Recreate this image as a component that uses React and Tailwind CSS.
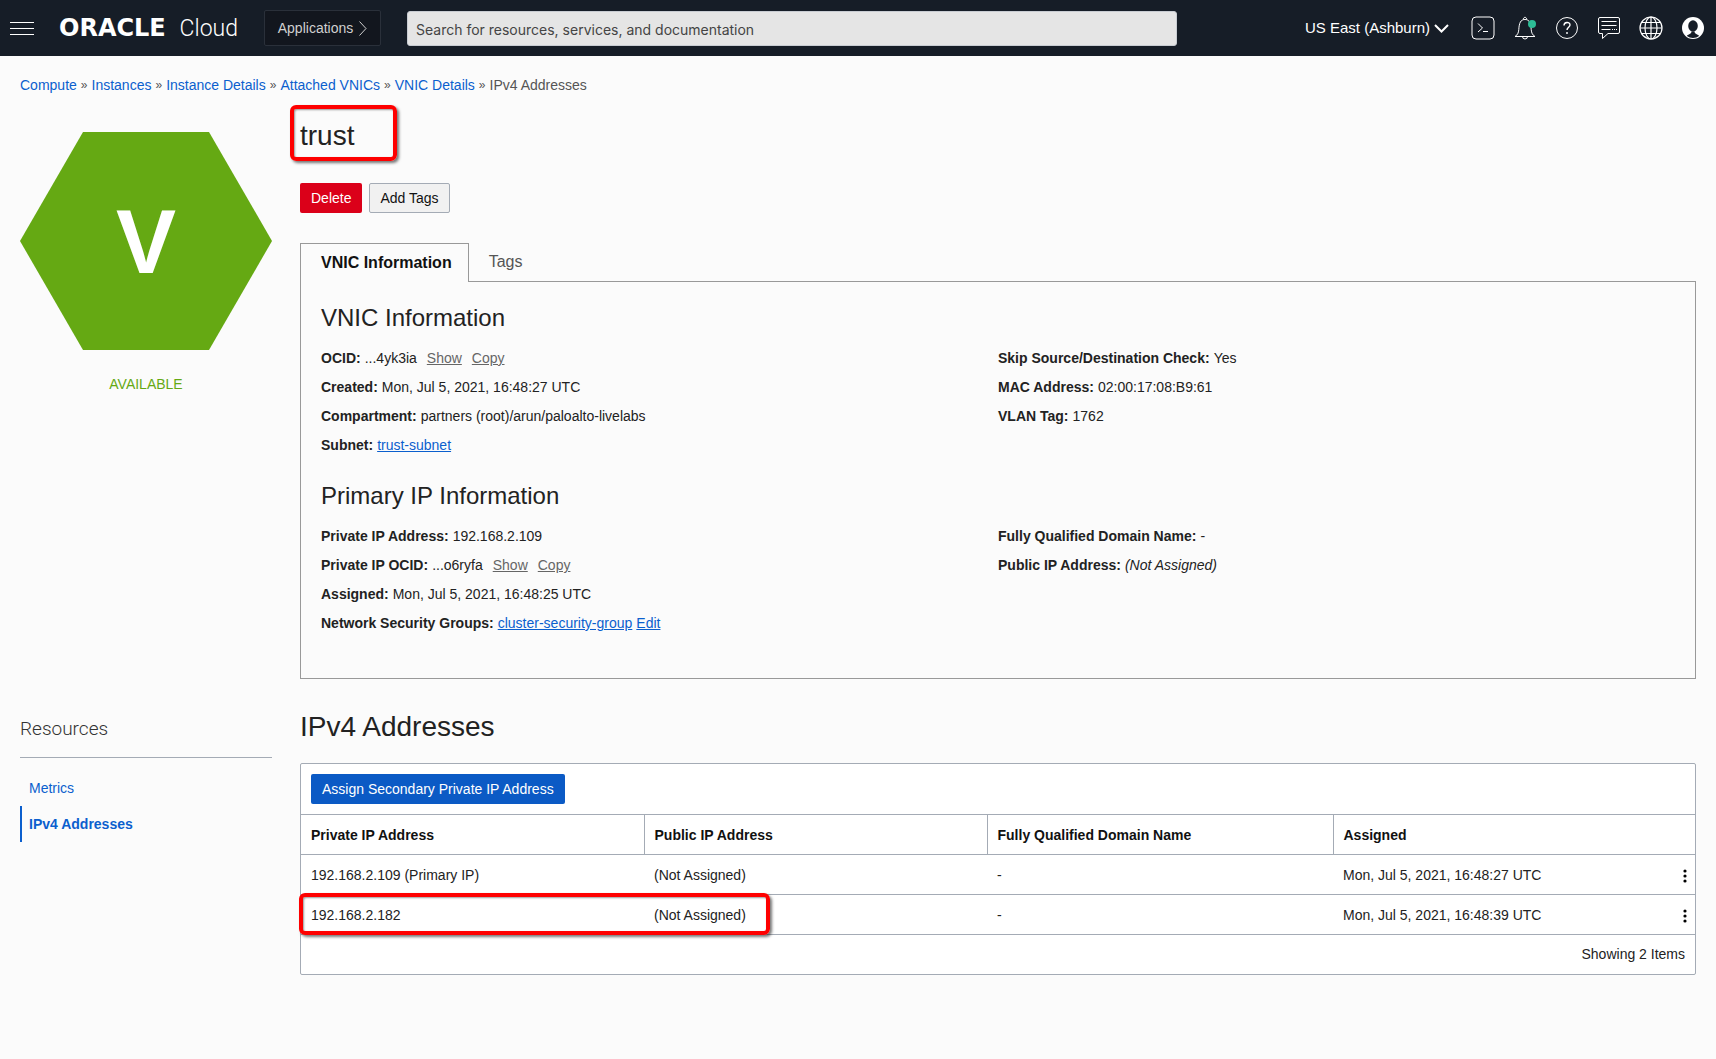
import React from "react";

const linkCls = "text-[#0b5fce] hover:underline";

function Crumbs() {
  const items = ["Compute", "Instances", "Instance Details", "Attached VNICs", "VNIC Details"];
  return (
    <nav aria-label="Breadcrumb" className="flex gap-1 px-5 pt-[19px] leading-5 text-[#555]">
      {items.map((t) => (
        <React.Fragment key={t}>
          <a href="#" className={linkCls}>{t}</a>
          <span className="text-xs leading-5">»</span>
        </React.Fragment>
      ))}
      <span>IPv4 Addresses</span>
    </nav>
  );
}

function Header() {
  return (
    <header className="flex h-14 items-center bg-[#161d27] pr-[11px] pl-[10px] text-white">
      <button aria-label="Menu" className="flex w-6 flex-col gap-[5px]">
        <span className="h-px bg-white" />
        <span className="h-px bg-white" />
        <span className="h-px bg-white" />
      </button>
      <a href="#" className="ml-[25px] flex w-[179px] items-baseline justify-between leading-7">
        <span className="font-['DejaVu_Sans'] text-2xl font-bold">ORACLE</span>
        <span className="font-[Roboto] text-[23px] font-light">Cloud</span>
      </a>
      <button className="ml-[26px] flex h-9 w-[117px] shrink-0 items-center justify-center gap-[6px] rounded-xs border border-[#2a303a] bg-[#12161e] text-[#d0d0d0]">
        Applications
        <svg width="8" height="15" viewBox="0 0 8 15" fill="none" stroke="currentColor"><path d="M0.5 0.5 7 7.5 0.5 14.5" /></svg>
      </button>
      <input
        type="search"
        aria-label="Search"
        placeholder="Search for resources, services, and documentation"
        className="ml-[26px] h-[35px] w-[770px] rounded-[3px] border border-[#c8ccd2] bg-[#e5e5e5] px-2 pt-[2px] font-[Inter] text-[#444] placeholder:text-[#444]"
      />
      <button className="ml-auto flex shrink-0 items-center gap-1 text-[15px] leading-6">
        US East (Ashburn)
        <svg width="15" height="9" viewBox="0 0 15 9" fill="none" stroke="currentColor" strokeWidth="2"><path d="M1 1 7.5 7.5 14 1" /></svg>
      </button>
      <div className="ml-[22px] flex items-center gap-[18px]">
        <button aria-label="Cloud Shell">
          <svg width="24" height="24" viewBox="0 0 24 24" fill="none" stroke="white"><rect x="1" y="1" width="22" height="22" rx="4" /><path d="M7 7.500l4.500 4.500L7 16M12 15.500h5" /></svg>
        </button>
        <button aria-label="Notifications">
          <svg width="24" height="24" viewBox="0 0 24 24" fill="none" stroke="white"><path d="M2 20.5h20c-2.500-1.500-3.500-3.500-3.800-7C17.800 7 16.500 3.500 12 3.500S6.200 7 5.800 13.500C5.500 17 4.500 19 2 20.500zM10.500 3.500a1.600 1.600 0 1 1 3 0M9.500 20.500a2.500 2.500 0 0 0 5 0" /><circle cx="19" cy="8" r="4" fill="#2dbd96" stroke="none" /></svg>
        </button>
        <button aria-label="Help">
          <svg width="24" height="24" viewBox="0 0 24 24" fill="none" stroke="white"><circle cx="12" cy="12" r="10.500" /><path d="M9 9.500c0-4 6-4 6-.5 0 2.200-3 2.300-3 5M12 16v2" strokeWidth="1.400" /></svg>
        </button>
        <button aria-label="Feedback">
          <svg width="24" height="24" viewBox="0 0 24 24" fill="none" stroke="white"><path d="M3 1.500h18q1.500 0 1.500 1.500v13q0 1.500-1.500 1.500H11L5.500 22.500v-5H3q-1.500 0-1.500-1.500V3Q1.500 1.500 3 1.500z" /><path d="M4.500 5.500h15M4.500 9.500h15M4.500 13.500h9M15 13.500h1M17 13.500h1M19 13.500h1" /></svg>
        </button>
        <button aria-label="Language">
          <svg width="24" height="24" viewBox="0 0 24 24" fill="none" stroke="white" strokeWidth="1.200"><circle cx="12" cy="12" r="11" /><ellipse cx="12" cy="12" rx="6" ry="11" /><path d="M12 1v22M1 12h22M3 6.500h18M3 17.500h18" /></svg>
        </button>
        <button aria-label="Profile">
          <svg width="24" height="24" viewBox="0 0 24 24"><circle cx="12" cy="12" r="11" fill="white" /><ellipse cx="12" cy="10" rx="4.800" ry="5.800" fill="#161d27" /><path d="M6 20c0-1.500 4.500-1.500 4.500-4.500h3c0 3 4.500 3 4.500 4.500-3 2.500-9 2.500-12 0z" fill="#161d27" /></svg>
        </button>
      </div>
    </header>
  );
}

function Field({ label, children }) {
  return (
    <div className="flex gap-1 leading-[29px]">
      <dt className="font-bold">{label}:</dt>
      <dd className="flex gap-1">{children}</dd>
    </div>
  );
}

function Ocid({ value }) {
  return (
    <span className="flex gap-[10px]">
      {value}
      <button className="text-[#666] underline">Show</button>
      <button className="text-[#666] underline">Copy</button>
    </span>
  );
}

const rows = [
  ["192.168.2.109 (Primary IP)", "(Not Assigned)", "-", "Mon, Jul 5, 2021, 16:48:27 UTC"],
  ["192.168.2.182", "(Not Assigned)", "-", "Mon, Jul 5, 2021, 16:48:39 UTC"],
];

const under = "text-[#0b5fce] underline";

export default function App() {
  return (
    <div className="min-h-screen bg-[#fbfbfb] font-['Liberation_Sans',Arial,sans-serif] text-sm text-[#222]">
      <Header />
      <Crumbs />
      <div className="grid grid-cols-[252px_minmax(0,1fr)] gap-x-7 px-5">
        <div className="pt-[37px] text-center">
          <svg viewBox="0 0 252 218" className="w-full" role="img" aria-label="V">
            <path d="M63 0h126l63 109-63 109H63L0 109z" fill="#65a913" />
            <text x="126" y="141" textAnchor="middle" fontFamily="Liberation Sans" fontWeight="700" fontSize="90" fill="white">V</text>
          </svg>
          <p className="mt-6 leading-5 text-[#65a913]">AVAILABLE</p>
        </div>
        <main>
          <div className="relative pt-[25px]">
            <h1 className="text-[28px] leading-8">trust</h1>
            <div className="absolute top-[10px] -left-[10px] h-14 w-[107px] rounded-md border-4 border-[#fe0000] shadow-[2px_2px_3px_#0008,inset_1px_1px_2px_#0006]" />
          </div>
          <div className="mt-[31px] flex gap-[7px]">
            <button className="h-[30px] rounded-xs bg-[#db0019] px-[11px] text-white">Delete</button>
            <button className="h-[30px] rounded-xs border border-[#a4abb5] bg-[#f1f1f1] px-[10px] text-[#111]">Add Tags</button>
          </div>
          <div role="tablist" className="mt-[30px] flex text-base">
            <button role="tab" aria-selected="true" className="relative z-10 -mb-px h-[39px] border border-b-0 border-[#999] bg-[#fbfbfb] pr-4 pl-5 font-bold text-[#111]">VNIC Information</button>
            <button role="tab" aria-selected="false" className="px-5 text-[#555]">Tags</button>
          </div>
          <section className="border border-[#999] px-5 pt-5 pb-10">
            <h2 className="text-2xl leading-8">VNIC Information</h2>
            <dl className="mt-[10px] grid grid-cols-[677px_1fr]">
              <div>
                <Field label="OCID"><Ocid value="...4yk3ia" /></Field>
                <Field label="Created">Mon, Jul 5, 2021, 16:48:27 UTC</Field>
                <Field label="Compartment">partners (root)/arun/paloalto-livelabs</Field>
                <Field label="Subnet"><a href="#" className={under}>trust-subnet</a></Field>
              </div>
              <div>
                <Field label="Skip Source/Destination Check">Yes</Field>
                <Field label="MAC Address">02:00:17:08:B9:61</Field>
                <Field label="VLAN Tag">1762</Field>
              </div>
            </dl>
            <h2 className="mt-5 text-2xl leading-8">Primary IP Information</h2>
            <dl className="mt-[10px] grid grid-cols-[677px_1fr]">
              <div>
                <Field label="Private IP Address">192.168.2.109</Field>
                <Field label="Private IP OCID"><Ocid value="...o6ryfa" /></Field>
                <Field label="Assigned">Mon, Jul 5, 2021, 16:48:25 UTC</Field>
                <Field label="Network Security Groups">
                  <a href="#" className={under}>cluster-security-group</a>
                  <a href="#" className={under}>Edit</a>
                </Field>
              </div>
              <div>
                <Field label="Fully Qualified Domain Name">-</Field>
                <Field label="Public IP Address"><i>(Not Assigned)</i></Field>
              </div>
            </dl>
          </section>
        </main>
        <aside className="mt-9">
          <h2 className="border-b border-[#a4abb5] pb-[14px] font-[Roboto] text-[19px] leading-7 font-light text-[#333]">Resources</h2>
          <nav className="mt-3" aria-label="Resources">
            <a href="#" className="block border-l-2 border-transparent pl-[7px] leading-9 text-[#0b5fce]">Metrics</a>
            <a href="#" aria-current="page" className="block border-l-2 border-[#0b5fce] pl-[7px] leading-9 font-bold text-[#0b5fce]">IPv4 Addresses</a>
          </nav>
        </aside>
        <section className="mt-8">
          <h2 className="text-[28px] leading-8">IPv4 Addresses</h2>
          <div className="mt-5 rounded-xs border border-[#a4abb5] bg-white">
            <div className="p-[10px]">
              <button className="h-[30px] rounded-xs bg-[#0b5ac5] px-[11px] text-white">Assign Secondary Private IP Address</button>
            </div>
            <div className="relative">
              <table className="w-full table-fixed border-collapse text-left">
                <colgroup><col className="w-[343px]" /><col className="w-[343px]" /><col className="w-[346px]" /><col /><col className="w-10" /></colgroup>
                <thead>
                  <tr className="h-10 border-y border-[#a4abb5]">
                    {["Private IP Address", "Public IP Address", "Fully Qualified Domain Name"].map((h) => (
                      <th key={h} className="border-r border-[#a4abb5] px-[10px] text-[#111]">{h}</th>
                    ))}
                    <th colSpan={2} className="px-[10px] text-[#111]">Assigned</th>
                  </tr>
                </thead>
                <tbody>
                  {rows.map((r) => (
                    <tr key={r[0]} className="h-10 border-b border-[#a4abb5]">
                      {r.map((c, i) => <td key={i} className="px-[10px]">{c}</td>)}
                      <td className="pr-2 text-right">
                        <button aria-label="Actions" className="align-middle">
                          <svg width="4" height="14" viewBox="0 0 4 14"><circle cx="2" cy="2" r="1.600" /><circle cx="2" cy="7" r="1.600" /><circle cx="2" cy="12" r="1.600" /></svg>
                        </button>
                      </td>
                    </tr>
                  ))}
                </tbody>
              </table>
              <div className="absolute -left-[2px] bottom-0 h-[42px] w-[471px] rounded-md border-4 border-[#fe0000] shadow-[2px_2px_3px_#0008,inset_1px_1px_2px_#0006]" />
            </div>
            <p className="px-[10px] text-right leading-[39px]">Showing 2 Items</p>
          </div>
        </section>
      </div>
    </div>
  );
}
